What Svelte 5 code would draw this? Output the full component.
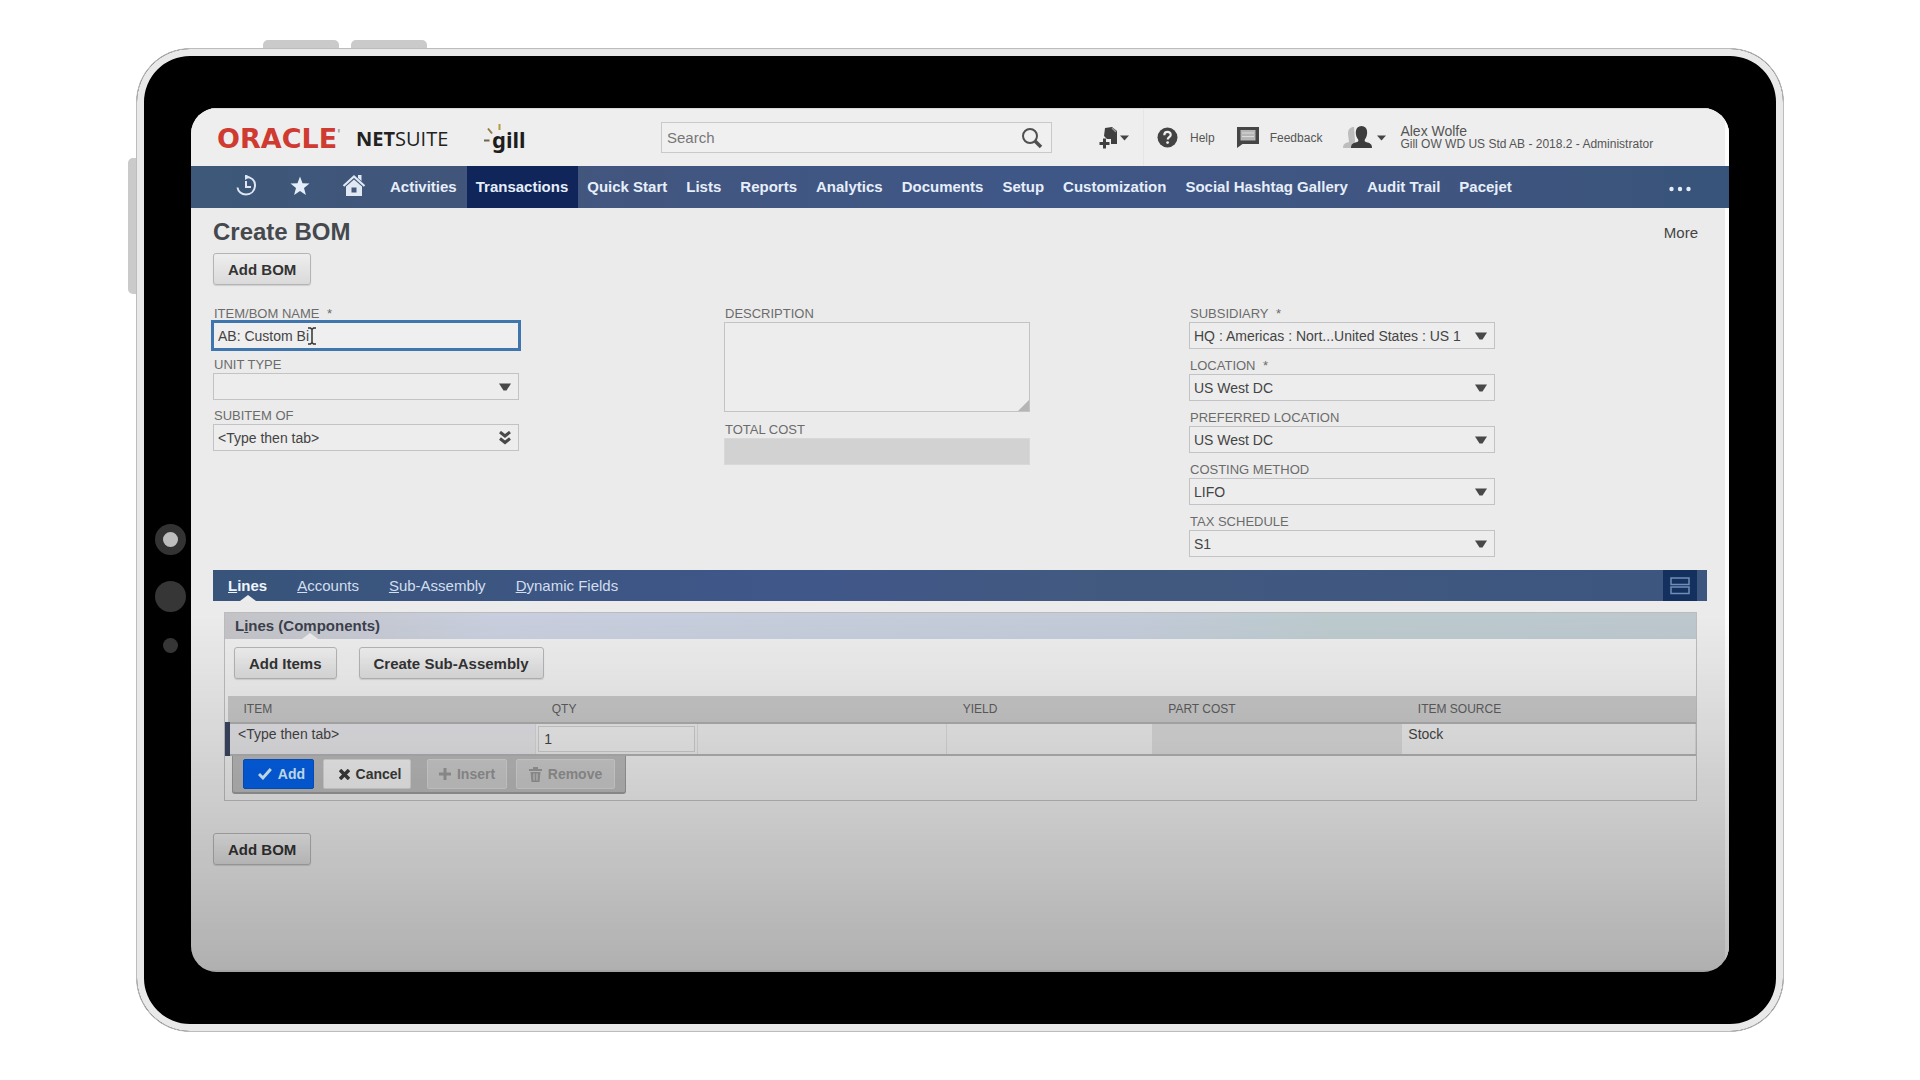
<script>
  const menu = ['Activities', 'Transactions', 'Quick Start', 'Lists', 'Reports', 'Analytics', 'Documents', 'Setup', 'Customization', 'Social Hashtag Gallery', 'Audit Trail', 'Pacejet'];
  const activeMenu = 'Transactions';

  const tabs = ['Lines', 'Accounts', 'Sub-Assembly', 'Dynamic Fields'];
  let activeTab = $state('Lines');

  const classification = [
    { id: 'subsidiary', label: 'SUBSIDIARY', required: true, value: 'HQ : Americas : Nort...United States : US 1' },
    { id: 'location', label: 'LOCATION', required: true, value: 'US West DC' },
    { id: 'preferred', label: 'PREFERRED LOCATION', required: false, value: 'US West DC' },
    { id: 'costing', label: 'COSTING METHOD', required: false, value: 'LIFO' },
    { id: 'tax', label: 'TAX SCHEDULE', required: false, value: 'S1' }
  ];

  let bomName = $state('AB: Custom Bi');
  let subitem = $state('<Type then tab>');
  let qty = $state('1');
</script>

{#snippet arrow()}
  <svg class="arrow" width="14" height="10" viewBox="0 0 14 10" aria-hidden="true"><path d="M1 1.5h12L8.5 8.5h-3z" fill="#484848" /></svg>
{/snippet}

{#snippet caret()}
  <svg width="9" height="6" viewBox="0 0 9 6" aria-hidden="true"><path d="M0 0.5h9L4.5 5.5z" fill="#444" /></svg>
{/snippet}

<div class="stage">
  <div class="device">
    <span class="key top-a"></span>
    <span class="key top-b"></span>
    <span class="key side"></span>
    <div class="sensors">
      <span class="lens"></span>
      <span class="big"></span>
      <span class="small"></span>
    </div>

    <div class="screen">
      <header>
        <div class="brand">
          <span class="oracle">ORACLE<sup>'</sup></span>
          <span class="netsuite"><b>NET</b>SUITE</span>
          <span class="gill">
            <svg width="22" height="24" viewBox="0 0 22 24" aria-hidden="true">
              <path d="M0 17.500h5.500" stroke="#6d6550" stroke-width="2" />
              <path d="M4 5.500l4 5" stroke="#8d7a45" stroke-width="2" />
              <path d="M15.500 1v6" stroke="#b89a3e" stroke-width="2" />
            </svg>
            <b>gill</b>
          </span>
        </div>

        <form class="search" role="search" onsubmit={(e) => e.preventDefault()}>
          <input type="text" placeholder="Search" aria-label="Search" />
          <button type="submit" aria-label="Run search">
            <svg width="22" height="22" viewBox="0 0 22 22" fill="none" stroke="#505050" aria-hidden="true">
              <circle cx="9" cy="9" r="7" stroke-width="2" />
              <path d="M14 14l6 6" stroke-width="3.500" />
            </svg>
          </button>
        </form>

        <div class="tools">
          <button class="tool create" aria-label="Create new">
            <svg width="19" height="23" viewBox="0 0 19 23" aria-hidden="true">
              <path d="M6 2l7-1 5 4v13h-6v-5H8l-3-3z" fill="#3f3f3f" />
              <path d="M13 2l4 4" stroke="#999" stroke-width="1.500" />
              <path d="M5.500 12.500v10M0.500 17.500h10" stroke="#3f3f3f" stroke-width="3" />
            </svg>
            {@render caret()}
          </button>
          <a class="tool help" href="#help">
            <svg width="21" height="21" viewBox="0 0 21 21" aria-hidden="true">
              <circle cx="10.500" cy="10.500" r="10" fill="#434343" />
              <path d="M7.300 8.200c0-4.400 6.600-4.200 6.400-.3-.1 2.300-3 2.200-3 4.700" fill="none" stroke="#eee" stroke-width="2.200" />
              <circle cx="10.600" cy="15.600" r="1.400" fill="#eee" />
            </svg>
            <span>Help</span>
          </a>
          <a class="tool feedback" href="#feedback">
            <svg width="22" height="21" viewBox="0 0 22 21" aria-hidden="true">
              <path d="M0 0h22v17H5.500L0 21z" fill="#454545" />
              <path d="M3.500 3h15v10.500h-15z" fill="#b5b5b5" />
              <path d="M5 6h12M5 9.500h12" stroke="#dcdcdc" />
            </svg>
            <span>Feedback</span>
          </a>
          <button class="tool user">
            <svg width="30" height="25" viewBox="0 0 30 25" aria-hidden="true">
              <path d="M5 9c0-5 2-7 6-7l1 14-2 7H0c0-4 2-5 6-6z" fill="#bdbdbd" />
              <path d="M8 23c0-4 2-5 6-6 2-.6 1.500-2 .5-3.500C12 10 11.500 1 18.500 1S25 10 22.500 13.500c-1 1.500-1.500 2.900.5 3.500 4 1 6 2 6 6z" fill="#3d3d3d" />
            </svg>
            {@render caret()}
            <span class="who"><span class="name">Alex Wolfe</span><span>Gill OW WD US Std AB - 2018.2 - Administrator</span></span>
          </button>
        </div>
      </header>

      <nav aria-label="Main">
        <a class="icon" href="#recent" aria-label="Recent records">
          <svg width="22" height="22" viewBox="0 0 22 22" fill="none" stroke="#dde6f2" stroke-width="2" aria-hidden="true">
            <path d="M10 2c6-.8 10.500 3.500 10 9-.5 5-4 8.500-9 8.500-4.500 0-8-3-8.500-7" />
            <path d="M11 6v6h5" /><path d="M10 -1l5 3-5 3z" fill="#dde6f2" stroke="none" />
          </svg>
        </a>
        <a class="icon" href="#shortcuts" aria-label="Shortcuts">
          <svg width="20" height="20" viewBox="0 0 20 20" aria-hidden="true"><path d="M10 0.500l2.500 6.700 7 .3-5.500 4.400 1.900 7L10 15l-5.900 3.900 1.900-7L.5 7.500l7-.3z" fill="#e6eefa" /></svg>
        </a>
        <a class="icon" href="#home" aria-label="Home">
          <svg width="24" height="23" viewBox="0 0 24 23" aria-hidden="true">
            <path d="M1.500 12L12 2.500 22.500 12" fill="none" stroke="#e0e8f4" stroke-width="2.200" />
            <path d="M16 1h3.500v6L16 4z" fill="#e0e8f4" />
            <path d="M4 12.500L12 5.500l8 7V22H4z" fill="#e0e8f4" />
            <path d="M9.500 18.500v-5h5v5z" fill="#44587c" />
          </svg>
        </a>
        {#each menu as item}
          <a href="#menu" class:active={item === activeMenu}>{item}</a>
        {/each}
        <button class="overflow" aria-label="More menus">
          <svg width="22" height="6" viewBox="0 0 22 6" fill="#e6eefa" aria-hidden="true"><circle cx="2.500" cy="3" r="2.200" /><circle cx="11" cy="3" r="2.200" /><circle cx="19.500" cy="3" r="2.200" /></svg>
        </button>
      </nav>

      <main>
        <div class="heading">
          <h1>Create BOM</h1>
          <a href="#more">More</a>
        </div>
        <button class="btn">Add BOM</button>

        <div class="form">
          <div class="column left">
            <div class="field">
              <label for="name">ITEM/BOM NAME <span>*</span></label>
              <div class="control">
                <input id="name" class="focused" type="text" bind:value={bomName} />
                <svg class="pointer" width="8" height="18" viewBox="0 0 8 18" fill="none" stroke="#333" stroke-width="1.500" aria-hidden="true"><path d="M0 1h2.500L4 2.500 5.500 1H8M4 2.500v13M0 17h2.500L4 15.500 5.500 17H8" /></svg>
              </div>
            </div>
            <div class="field">
              <label for="unit">UNIT TYPE</label>
              <div class="control">
                <select id="unit"><option></option></select>
                {@render arrow()}
              </div>
            </div>
            <div class="field">
              <label for="subitem">SUBITEM OF</label>
              <div class="control">
                <input id="subitem" type="text" bind:value={subitem} />
                <svg class="arrow" width="14" height="14" viewBox="0 0 14 14" fill="none" stroke="#484848" stroke-width="3" aria-hidden="true"><path d="M2 1l5 4 5-4M2 7.500l5 4 5-4" /></svg>
              </div>
            </div>
          </div>

          <div class="column middle">
            <div class="field">
              <label for="description">DESCRIPTION</label>
              <div class="control area">
                <textarea id="description"></textarea>
                <svg class="grip" width="11" height="11" viewBox="0 0 11 11" aria-hidden="true"><path d="M11 0v11H0z" fill="#b5b5b5" /></svg>
              </div>
            </div>
            <div class="field">
              <label for="total">TOTAL COST</label>
              <div class="control"><input id="total" class="readonly" type="text" readonly /></div>
            </div>
          </div>

          <div class="column right">
            {#each classification as f}
              <div class="field">
                <label for={f.id}>{f.label} {#if f.required}<span>*</span>{/if}</label>
                <div class="control">
                  <select id={f.id}><option>{f.value}</option></select>
                  {@render arrow()}
                </div>
              </div>
            {/each}
          </div>
        </div>

        <div class="tabs" role="tablist">
          {#each tabs as t}
            <button role="tab" aria-selected={t === activeTab} class:active={t === activeTab} onclick={() => (activeTab = t)}><u>{t[0]}</u>{t.slice(1)}</button>
          {/each}
          <button class="layout" aria-label="Toggle tab layout">
            <svg width="20" height="18" viewBox="0 0 20 18" fill="none" stroke="#6f8db5" stroke-width="1.500" aria-hidden="true"><path d="M1 1h18v6.500H1zM1 10h18v6.500H1z" /></svg>
          </button>
        </div>

        <section class="panel">
          <h2>L<u>i</u>nes (Components)</h2>
          <div class="toolbar">
            <button class="btn">Add Items</button>
            <button class="btn">Create Sub-Assembly</button>
          </div>
          <table>
            <thead>
              <tr>
                <th class="c-item">ITEM</th><th class="c-qty">QTY</th><th class="c-blank"></th>
                <th class="c-yield">YIELD</th><th class="c-cost">PART COST</th><th class="c-source">ITEM SOURCE</th>
              </tr>
            </thead>
            <tbody>
              <tr>
                <td class="item">&lt;Type then tab&gt;</td>
                <td class="qty"><input type="text" aria-label="Quantity" bind:value={qty} /></td>
                <td></td>
                <td></td>
                <td class="cost"></td>
                <td class="source">Stock</td>
              </tr>
            </tbody>
          </table>
          <div class="actions">
            <button class="add">
              <svg width="14" height="12" viewBox="0 0 14 12" fill="none" stroke="#d5f0ff" stroke-width="3" aria-hidden="true"><path d="M1 6l4 4 8-9" /></svg>Add
            </button>
            <button class="cancel">
              <svg width="11" height="11" viewBox="0 0 11 11" stroke="#3a3a3a" stroke-width="3.500" aria-hidden="true"><path d="M1 1l9 9M10 1l-9 9" /></svg>Cancel
            </button>
            <button class="insert" disabled>
              <svg width="12" height="12" viewBox="0 0 12 12" stroke="#979797" stroke-width="3" aria-hidden="true"><path d="M6 0v12M0 6h12" /></svg>Insert
            </button>
            <button class="remove" disabled>
              <svg width="13" height="15" viewBox="0 0 13 15" fill="#979797" aria-hidden="true"><path d="M0 2h4V0h5v2h4v2H0zM1.500 5h10l-1 10h-8z" /><path d="M5 6.500v7M8 6.500v7" stroke="#d0d0d0" /></svg>Remove
            </button>
          </div>
        </section>

        <button class="btn">Add BOM</button>
      </main>
    </div>
  </div>
</div>

<style>
  :global(body) { margin: 0; background: #fff; }
  .stage, .stage * { box-sizing: border-box; }
  .stage {
    padding: 48px 136px;
    font-family: "Liberation Sans", Arial, sans-serif;
    font-size: 14px;
    color: #444;
  }
  button, input, select, textarea { font: inherit; color: inherit; margin: 0; }
  button { cursor: pointer; }
  a { color: inherit; text-decoration: none; }

  /* Tablet shell */
  .device {
    position: relative;
    padding: 59px 54px;
    border: 1px solid #bdbdbd;
    border-radius: 54px;
    background: #000;
    box-shadow: inset 0 0 0 7px #e9e9e9;
    min-height: 984px;
    display: flex;
  }
  .key { position: absolute; background: #cacaca; }
  .top-a, .top-b { top: -9px; width: 76px; height: 8px; border-radius: 5px 5px 0 0; }
  .top-a { left: 126px; }
  .top-b { left: 214px; }
  .side { left: -9px; top: 109px; width: 8px; height: 136px; border-radius: 5px 0 0 5px; }
  .sensors {
    position: absolute;
    left: 18px;
    top: 475px;
    display: flex;
    flex-direction: column;
    align-items: center;
    gap: 26px;
  }
  .sensors span { border-radius: 50%; background: #363636; width: 31px; height: 31px; }
  .sensors .lens { border: 8px solid #333; background: #bdbdbd; }
  .sensors .small { width: 15px; height: 15px; }

  .screen {
    position: relative;
    flex: 1;
    min-width: 0;
    border-radius: 26px;
    overflow: hidden;
    background: #ebebeb;
    display: flex;
    flex-direction: column;
  }
  .screen::after {
    content: "";
    position: absolute;
    inset: 0;
    pointer-events: none;
    background: linear-gradient(to bottom, transparent 59%, rgba(0, 0, 0, 0.25) 100%);
    border-bottom: 2px solid rgba(0, 0, 0, 0.3);
  }

  /* Top bar */
  header {
    height: 58px;
    display: grid;
    grid-template-columns: 444px minmax(200px, 391px) 1fr;
    align-items: center;
    padding-left: 26px;
    background: #eeeeee;
    border-right: 4px solid #fdfdfd;
    border-top: 1px solid #d8d8d8;
  }
  .brand { display: flex; align-items: center; line-height: 28px; padding-top: 2px; }
  .oracle { width: 139px; font: bold 27px/28px "DejaVu Sans", sans-serif; color: #cf3a31; white-space: nowrap; }
  .oracle sup { font-size: 12px; line-height: 0; color: #999; }
  .netsuite { width: 128px; font: 20px/28px "Open Sans", sans-serif; color: #222; }
  .gill { display: flex; align-items: center; color: #1d1d1d; font: 22px/28px "Noto Sans", sans-serif; }
  .gill svg { margin-right: -14px; margin-bottom: 8px; }
  .search {
    display: flex;
    height: 31px;
    border: 1px solid #c9c9c9;
    background: #f0f0f0;
  }
  .search input { flex: 1; min-width: 0; border: 0; padding: 0 5px; background: none; font-size: 15px; outline: 0; }
  .search input::placeholder { color: #777; opacity: 1; }
  .search button { border: 0; background: none; padding: 3px 8px 0; }
  .tools { display: flex; align-items: center; height: 100%; padding-left: 47px; font-size: 12px; color: #555; }
  .tool { display: flex; align-items: center; border: 0; background: none; padding: 0; white-space: nowrap; }
  .create { gap: 2px; padding-right: 14px; height: 100%; border-right: 1px solid #e5e5e5; }
  .help { padding-left: 13px; gap: 12px; }
  .feedback { padding-left: 22px; gap: 11px; }
  .user { padding-left: 21px; gap: 4px; }
  .who { display: flex; flex-direction: column; align-items: flex-start; padding-left: 10px; line-height: 12px; }
  .name { font-size: 14px; line-height: 13px; }

  nav {
    height: 42px;
    display: flex;
    align-items: stretch;
    padding-left: 28px;
    background: linear-gradient(to right, #3d5878, #42557c 20%, #3f5787 55%, #405580 80%, #38547a);
    color: #e6eefa;
    font-size: 15px;
    font-weight: bold;
    white-space: nowrap;
  }
  nav a { display: flex; align-items: center; padding: 0 10px 2px 9px; }
  nav a.icon { width: 54px; padding: 0 0 3px; justify-content: center; }
  nav a.active { background: #10265a; }
  .overflow { margin-left: auto; margin-right: 38px; border: 0; background: none; padding: 4px 0 0; display: flex; align-items: center; }

  /* Page body */
  main { flex: 1; padding: 10px 18px 90px 22px; border-right: 4px solid #fdfdfd; }
  .heading { display: flex; justify-content: space-between; align-items: center; padding-right: 9px; font-size: 15px; }
  h1 { margin: 0; font-size: 24px; line-height: 28px; color: #45484d; }
  .btn {
    height: 32px;
    padding: 0 14px;
    border: 1px solid #b4b4b6;
    border-radius: 3px;
    background: linear-gradient(to bottom, #eeeeee, #dadadb);
    box-shadow: 0 1px 1px rgba(0, 0, 0, 0.12);
    font-size: 15px;
    font-weight: bold;
    color: #333;
  }
  .heading + .btn { display: block; margin-top: 7px; }

  .form { display: grid; grid-template-columns: 511fr 465fr 518fr; padding-top: 21px; }
  .column { display: flex; flex-direction: column; gap: 8px; max-width: 306px; width: 100%; }
  .right { gap: 9px; }
  .middle { gap: 10px; }
  .field { display: flex; flex-direction: column; }
  label { font-size: 13px; line-height: 16px; color: #6b6b6b; padding-left: 1px; }
  label span { padding-left: 4px; }
  .control { position: relative; display: flex; }
  .control input, .control select, textarea {
    width: 100%;
    height: 27px;
    border: 1px solid #c3c3c6;
    border-radius: 0;
    background: #ededed;
    padding: 0 4px;
    color: #444;
    appearance: none;
    outline: 0;
  }
  .control textarea { height: 90px; resize: none; }
  .control input.focused { box-shadow: 0 0 0 2px #3f76ae; border-color: #3f76ae; background: #efefef; }
  .control input.readonly { background: #d2d2d2; border-color: #d8d8d8; }
  .arrow { position: absolute; right: 7px; top: 0; bottom: 0; margin: auto 0; pointer-events: none; }
  .pointer { position: absolute; left: 95px; top: 5px; pointer-events: none; }
  .grip { position: absolute; right: 1px; bottom: 1px; pointer-events: none; }

  /* Subtabs */
  .tabs {
    display: flex;
    height: 31px;
    margin-top: 13px;
    background: linear-gradient(to right, #38547a, #40578a 40%, #42597f 60%, #3c5680);
    color: #d3deee;
    font-size: 15px;
  }
  .tabs button { position: relative; border: 0; background: none; padding: 0 15px; }
  .tabs button.active { font-weight: bold; color: #eef4fc; }
  .tabs button.active::after, h2::after {
    content: "";
    position: absolute;
    left: 50%;
    bottom: 0;
    margin-left: -8px;
    border: 8px solid transparent;
    border-top: 0;
    border-bottom: 6px solid #ededed;
  }
  .tabs button.layout { margin: 0 10px 0 auto; padding: 0 7px; background: #14305f; display: flex; align-items: center; }

  .panel { margin: 11px 10px 32px 11px; border: 1px solid #bcbcbe; background: #ededed; }
  h2 {
    position: relative;
    width: 100%;
    margin: 0;
    padding-left: 10px;
    font-size: 15px;
    line-height: 26px;
    color: #3c3f4c;
    background: linear-gradient(to right, #c3c3c7, #c8cedd 18%, #c3cbd9 60%, #bccace 75%, #bcc8ce);
  }
  h2::after { left: 85px; }
  .toolbar { display: flex; gap: 22px; padding: 8px 9px 17px; }
  table { width: 100%; border-collapse: collapse; table-layout: fixed; }
  th {
    height: 27px;
    padding: 0 16px;
    background: #c6c6c6;
    text-align: left;
    font-size: 12px;
    font-weight: normal;
    color: #5c5c5c;
    border-bottom: 2px solid #adadad;
  }
  .c-item { width: 21%; }
  .c-qty { width: 11%; }
  .c-blank { width: 17%; }
  .c-yield { width: 14%; }
  .c-cost { width: 17%; }
  .c-source { width: 20%; }
  td {
    height: 32px;
    padding: 2px 6px;
    vertical-align: top;
    background: #e9e9e9;
    border-right: 1px solid #d6d6d6;
    border-bottom: 2px solid #b0b0b0;
  }
  td.item { background: #e1e1e5; border-left: 5px solid #3a4560; padding-left: 8px; }
  td.qty { padding: 2px; }
  td.qty input { display: block; width: 100%; height: 26px; padding: 0 5px; border: 1px solid #cbcbcb; background: #ebebeb; }
  td.cost { background: #d6d6d6; }

  .actions {
    display: flex;
    align-items: center;
    gap: 9px;
    width: fit-content;
    height: 38px;
    margin: 0 0 6px 7px;
    padding: 0 10px;
    background: #b8b8b8;
    border: 1px solid #999;
    border-bottom-width: 2px;
    border-top: 0;
    border-radius: 0 0 3px 3px;
  }
  .actions button {
    display: flex;
    align-items: center;
    justify-content: center;
    gap: 6px;
    height: 30px;
    border: 1px solid #d5d5d5;
    border-radius: 2px;
    padding: 0 8px;
    font-weight: bold;
    background: #eeeeee;
    color: #3a3a3a;
  }
  .actions button.add { width: 71px; padding-left: 14px; background: #0560e6; border-color: #0454cc; color: #d5f0ff; }
  .actions button.cancel { width: 88px; padding-left: 14px; }
  .actions button.insert { width: 80px; margin-left: 7px; background: #c9c9c9; color: #929292; }
  .actions button.remove { width: 99px; background: #c9c9c9; color: #929292; }
</style>
